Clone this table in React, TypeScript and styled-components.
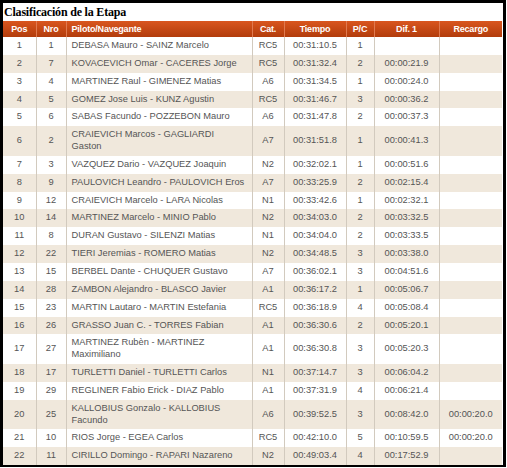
import React from "react";
import styled, { createGlobalStyle } from "styled-components";

const Global = createGlobalStyle`
  html, body { margin: 0; padding: 0; background: #ffffff; }
  body { font-family: "Liberation Sans", Arial, sans-serif; }
`;

const Frame = styled.div`
  width: 500px;
  border-top: 3px solid #000;
  border-left: 3px solid #000;
  border-right: 3px solid #000;
  border-bottom: 2px solid #000;
  background: #fff;
`;

const Title = styled.div`
  height: 18px;
  display: flex;
  align-items: center;
  padding-left: 1px;
  font-family: "Liberation Serif", "Times New Roman", serif;
  font-weight: 700;
  font-size: 12px;
  color: #000;
  letter-spacing: -0.2px;
`;

const Table = styled.table`
  width: 499px;
  border-collapse: collapse;
  table-layout: fixed;
  font-size: 9.3px;
  color: #555;
`;

const HeadRow = styled.tr`
  background: linear-gradient(#d9561f, #b23c0c);
`;

const Th = styled.th<{ $align?: string }>`
  height: 16px;
  padding: 0 0 0 ${(p) => (p.$align === "left" ? "5px" : "0")};
  text-align: ${(p) => p.$align || "center"};
  color: #fff;
  font-weight: 700;
  font-size: 9px;
  letter-spacing: -0.2px;
  border-left: 1px solid #e07a50;
  &:first-child { border-left: none; }
`;

const Row = styled.tr<{ $alt: boolean }>`
  background: ${(p) => (p.$alt ? "#f0e8dc" : "#ffffff")};
`;

const Td = styled.td<{ $align?: string }>`
  padding: 3px ${(p) => (p.$align === "left" ? "2px 3px 5px" : "0")};
  line-height: 11.85px;
  text-align: ${(p) => p.$align || "center"};
  white-space: pre;
  border-left: 1px solid #d2cabe;
  &:first-child { border-left: none; }
`;

type R = [string, string, string, string, string, string, string, string];

const rows: R[] = [
  ["1", "1", "DEBASA Mauro - SAINZ Marcelo", "RC5", "00:31:10.5", "1", "", ""],
  ["2", "7", "KOVACEVICH Omar - CACERES Jorge", "RC5", "00:31:32.4", "2", "00:00:21.9", ""],
  ["3", "4", "MARTINEZ Raul - GIMENEZ Matias", "A6", "00:31:34.5", "1", "00:00:24.0", ""],
  ["4", "5", "GOMEZ Jose Luis - KUNZ Agustin", "RC5", "00:31:46.7", "3", "00:00:36.2", ""],
  ["5", "6", "SABAS Facundo - POZZEBON Mauro", "A6", "00:31:47.8", "2", "00:00:37.3", ""],
  ["6", "2", "CRAIEVICH Marcos - GAGLIARDI\nGaston", "A7", "00:31:51.8", "1", "00:00:41.3", ""],
  ["7", "3", "VAZQUEZ Dario - VAZQUEZ Joaquin", "N2", "00:32:02.1", "1", "00:00:51.6", ""],
  ["8", "9", "PAULOVICH Leandro - PAULOVICH Eros", "A7", "00:33:25.9", "2", "00:02:15.4", ""],
  ["9", "12", "CRAIEVICH Marcelo - LARA Nicolas", "N1", "00:33:42.6", "1", "00:02:32.1", ""],
  ["10", "14", "MARTINEZ Marcelo - MINIO Pablo", "N2", "00:34:03.0", "2", "00:03:32.5", ""],
  ["11", "8", "DURAN Gustavo - SILENZI Matias", "N1", "00:34:04.0", "2", "00:03:33.5", ""],
  ["12", "22", "TIERI Jeremias - ROMERO Matias", "N2", "00:34:48.5", "3", "00:03:38.0", ""],
  ["13", "15", "BERBEL Dante - CHUQUER Gustavo", "A7", "00:36:02.1", "3", "00:04:51.6", ""],
  ["14", "28", "ZAMBON Alejandro - BLASCO Javier", "A1", "00:36:17.2", "1", "00:05:06.7", ""],
  ["15", "23", "MARTIN Lautaro - MARTIN Estefania", "RC5", "00:36:18.9", "4", "00:05:08.4", ""],
  ["16", "26", "GRASSO Juan C. - TORRES Fabian", "A1", "00:36:30.6", "2", "00:05:20.1", ""],
  ["17", "27", "MARTINEZ Rubèn - MARTINEZ\nMaximiliano", "A1", "00:36:30.8", "3", "00:05:20.3", ""],
  ["18", "17", "TURLETTI Daniel - TURLETTI Carlos", "N1", "00:37:14.7", "3", "00:06:04.2", ""],
  ["19", "29", "REGLINER Fabio Erick - DIAZ Pablo", "A1", "00:37:31.9", "4", "00:06:21.4", ""],
  ["20", "25", "KALLOBIUS Gonzalo - KALLOBIUS\nFacundo", "A6", "00:39:52.5", "3", "00:08:42.0", "00:00:20.0"],
  ["21", "10", "RIOS Jorge - EGEA Carlos", "RC5", "00:42:10.0", "5", "00:10:59.5", "00:00:20.0"],
  ["22", "11", "CIRILLO Domingo - RAPARI Nazareno", "N2", "00:49:03.4", "4", "00:17:52.9", ""],
];

const cols = [33, 30, 186, 32, 62, 28, 65, 63];
const heads = ["Pos", "Nro", "Piloto/Navegante", "Cat.", "Tiempo", "P/C", "Dif. 1", "Recargo"];

export default function App() {
  return (
    <>
      <Global />
      <Frame>
        <Title>Clasificación de la Etapa</Title>
        <Table>
          <colgroup>
            {cols.map((w, i) => (
              <col key={i} style={{ width: w }} />
            ))}
          </colgroup>
          <thead>
            <HeadRow>
              {heads.map((h, i) => (
                <Th key={h} $align={i === 2 ? "left" : "center"}>
                  {h}
                </Th>
              ))}
            </HeadRow>
          </thead>
          <tbody>
            {rows.map((r, ri) => (
              <Row key={ri} $alt={ri % 2 === 1}>
                {r.map((c, ci) => (
                  <Td key={ci} $align={ci === 2 ? "left" : "center"}>
                    {c}
                  </Td>
                ))}
              </Row>
            ))}
          </tbody>
        </Table>
      </Frame>
    </>
  );
}
